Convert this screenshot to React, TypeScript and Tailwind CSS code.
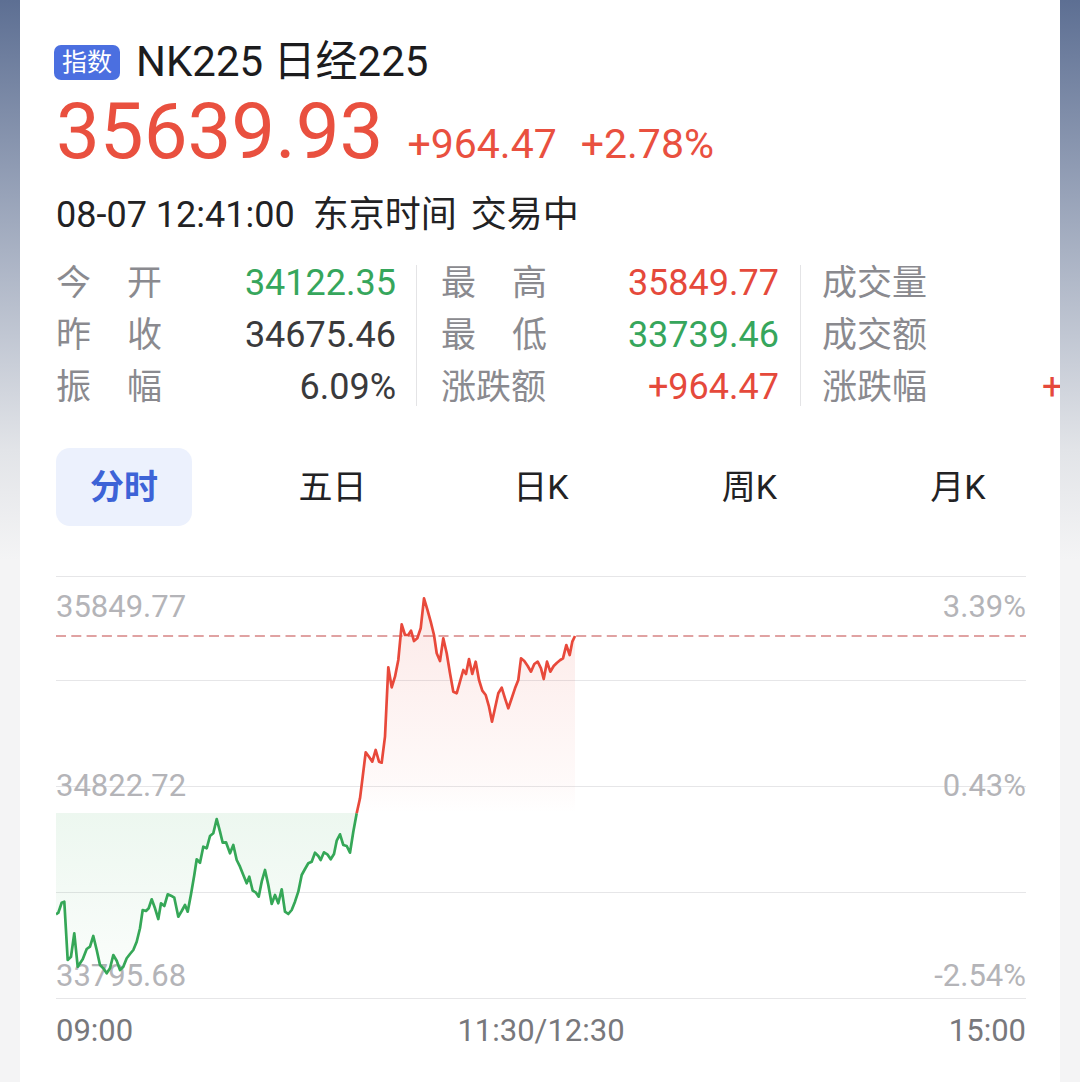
import React from "react";

const greenRaw: [number, number][] = [
  [48, 343], [55, 338], [65, 308], [73, 305], [83, 480], [93, 470], [103, 400], [113, 500],
  [128, 478], [140, 447], [150, 440], [160, 408], [170, 450], [180, 495], [190, 505], [200, 520],
  [210, 505], [220, 465], [230, 482], [240, 510], [250, 500], [260, 475], [270, 462], [280, 450],
  [290, 425], [300, 385], [308, 330], [318, 333], [326, 325], [335, 298], [345, 325], [355, 357],
  [363, 310], [373, 318], [383, 283], [393, 287], [403, 293], [415, 350], [425, 333], [435, 315],
  [443, 335], [453, 283], [463, 225], [470, 178], [480, 188], [490, 140], [500, 145], [510, 108],
  [520, 100], [530, 57], [540, 95], [548, 128], [558, 127], [570, 160], [580, 135], [590, 180],
  [600, 200], [610, 225], [620, 250], [628, 230], [638, 272], [648, 278], [656, 290], [665, 245],
  [675, 210], [685, 255], [695, 312], [705, 285], [715, 310], [725, 268], [735, 335], [745, 342],
  [755, 330], [765, 305], [775, 275], [785, 225], [795, 207], [805, 190], [815, 185], [825, 158],
  [835, 168], [842, 180], [852, 157], [862, 163], [872, 178], [882, 162], [890, 122], [900, 103],
  [910, 135], [920, 138], [930, 158], [940, 95], [950, 40],
];

const redRaw: [number, number][] = [
  [60, 655], [68, 590], [77, 517], [87, 530], [97, 545], [107, 510], [117, 545], [125, 548],
  [135, 470], [145, 262], [155, 322], [165, 290], [175, 240], [185, 133], [195, 165], [205, 165],
  [213, 152], [222, 183], [232, 175], [242, 145], [252, 55], [262, 88], [272, 125], [282, 165],
  [290, 220], [300, 243], [310, 175], [320, 220], [330, 280], [340, 335], [350, 340], [360, 305],
  [370, 270], [378, 282], [387, 237], [397, 282], [407, 245], [417, 300], [427, 332], [437, 345],
  [447, 380], [456, 425], [465, 385], [475, 340], [485, 323], [495, 355], [505, 385], [515, 355],
  [525, 325], [535, 300], [543, 235], [553, 243], [563, 258], [573, 275], [583, 252], [593, 245],
  [603, 265], [611, 297], [621, 245], [631, 275], [641, 258], [651, 248], [661, 240], [669, 235],
  [679, 195], [689, 225], [697, 185], [705, 168],
];

// page coordinates
const green = greenRaw.map(([x, y]) => [40 + x / 3, 800 + y / 3]);
const red = [green[green.length - 1], ...redRaw.map(([x, y]) => [340 + x / 3, 580 + y / 3])];

const BASE = 813;
const toPts = (pts: number[][]) => pts.map(([x, y]) => `${x.toFixed(1)},${y.toFixed(1)}`).join(" ");

const stats = [
  [
    { label: ["今", "开"], value: "34122.35", color: "text-[#36a65c]" },
    { label: ["昨", "收"], value: "34675.46", color: "text-[#3a3a3c]" },
    { label: ["振", "幅"], value: "6.09%", color: "text-[#3a3a3c]" },
  ],
  [
    { label: ["最", "高"], value: "35849.77", color: "text-[#e5493b]" },
    { label: ["最", "低"], value: "33739.46", color: "text-[#36a65c]" },
    { label: ["涨跌额"], value: "+964.47", color: "text-[#e5493b]" },
  ],
  [
    { label: ["成交量"], value: "--", color: "text-[#3a3a3c]" },
    { label: ["成交额"], value: "--", color: "text-[#3a3a3c]" },
    { label: ["涨跌幅"], value: "+2.78%", color: "text-[#e5493b]" },
  ],
];

function StatColumn({ rows, width }: { rows: (typeof stats)[number]; width: string }) {
  return (
    <div className={`shrink-0 flex flex-col ${width}`}>
      {rows.map((r, i) => (
        <div
          key={i}
          className="h-[52px] flex items-center justify-between text-[36px] leading-none whitespace-nowrap"
        >
          <span className="w-[106px] flex justify-between text-[#8a8a8f] text-[35px]">
            {r.label.map((l) => (
              <span key={l}>{l}</span>
            ))}
          </span>
          <span className={r.color}>{r.value}</span>
        </div>
      ))}
    </div>
  );
}

function Chart() {
  const grid = [576, 680, 786, 892, 998];
  return (
    <svg viewBox="56 576 970 423" width={970} height={423} className="block">
      <defs>
        <linearGradient id="gfill" gradientUnits="userSpaceOnUse" x1="0" y1={BASE} x2="0" y2="980">
          <stop offset="0" stopColor="#34a853" stopOpacity="0.09" />
          <stop offset="1" stopColor="#34a853" stopOpacity="0.02" />
        </linearGradient>
        <linearGradient id="rfill" gradientUnits="userSpaceOnUse" x1="0" y1="600" x2="0" y2={BASE}>
          <stop offset="0" stopColor="#e8483a" stopOpacity="0.12" />
          <stop offset="0.85" stopColor="#e8483a" stopOpacity="0.03" />
          <stop offset="1" stopColor="#e8483a" stopOpacity="0" />
        </linearGradient>
      </defs>
      {grid.map((y) => (
        <line key={y} x1={56} x2={1026} y1={y + 0.5} y2={y + 0.5} stroke="#e6e6e8" strokeWidth={1} />
      ))}
      <g fontFamily="Roboto, sans-serif" fontSize={31} fill="#b4b4b8">
        <text x={56} y={617}>35849.77</text>
        <text x={56} y={796}>34822.72</text>
        <text x={56} y={986}>33795.68</text>
        <text x={1026} y={617} textAnchor="end">3.39%</text>
        <text x={1026} y={796} textAnchor="end">0.43%</text>
        <text x={1026} y={986} textAnchor="end">-2.54%</text>
      </g>
      <line x1={56} x2={1026} y1={636} y2={636} stroke="#e0a2a2" strokeWidth={2.2} strokeDasharray="10 5.3" />
      <polygon points={`56,${BASE} ${toPts(green)} ${green[green.length - 1][0]},${BASE}`} fill="url(#gfill)" />
      <polygon points={`${red[0][0]},${BASE} ${toPts(red)} 575,${BASE}`} fill="url(#rfill)" />
      <polyline points={toPts(green)} fill="none" stroke="#35a757" strokeWidth={2.7} strokeLinejoin="round" />
      <polyline points={toPts(red)} fill="none" stroke="#e8493b" strokeWidth={2.7} strokeLinejoin="round" />
    </svg>
  );
}

export default function App() {
  const tabs = ["分时", "五日", "日K", "周K", "月K"];
  return (
    <div className="w-[1080px] min-h-[1082px] px-5 bg-[linear-gradient(180deg,#5d6f93_0px,#a8b1c3_250px,#e2e4e8_450px,#f4f4f5_560px)] font-['Roboto','Noto_Sans_CJK_SC',sans-serif]">
      <div className="bg-white min-h-[1082px] overflow-hidden pl-9 pr-[34px] pt-[44px]">
        <div className="h-[36px] flex items-center">
          <span className="-ml-0.5 h-[35px] px-[8px] rounded-[7px] bg-[#4b6fe0] text-white text-[25px] leading-none flex items-center">
            指数
          </span>
          <span className="ml-4 text-[42px] leading-none text-[#1c1c1e]">NK225 日经225</span>
        </div>

        <div className="mt-[13px] flex items-baseline text-[#e9503f] leading-none">
          <span className="text-[78px]">35639.93</span>
          <span className="ml-6 text-[41px]">+964.47</span>
          <span className="ml-6 text-[41px]">+2.78%</span>
        </div>

        <div className="mt-[26px] h-[36px] flex items-center text-[36px] leading-none text-[#222224] whitespace-nowrap">
          <span>08-07 12:41:00</span>
          <span className="ml-[18px]">东京时间</span>
          <span className="ml-[14px]">交易中</span>
        </div>

        <div className="mt-[24px] flex">
          <StatColumn rows={stats[0]} width="w-[340px]" />
          <div className="shrink-0 ml-5 mr-6 w-px h-[141px] self-center bg-[#e4e4e6]" />
          <StatColumn rows={stats[1]} width="w-[338px]" />
          <div className="shrink-0 ml-[21px] mr-[21px] w-px h-[141px] self-center bg-[#e4e4e6]" />
          <StatColumn rows={stats[2]} width="w-[337px]" />
        </div>

        <div className="mt-[35px] flex justify-between">
          {tabs.map((t, i) => (
            <div
              key={t}
              className={`w-[136px] h-[78px] rounded-[14px] flex items-center justify-center text-[34px] leading-none ${
                i === 0 ? "bg-[#ecf1fd] text-[#3d63d7] font-bold" : "text-[#222224]"
              }`}
            >
              {t}
            </div>
          ))}
        </div>

        <div className="mt-[50px]">
          <Chart />
          <div className="h-[62px] flex items-center justify-between text-[31px] leading-none text-[#78787c]">
            <span>09:00</span>
            <span>11:30/12:30</span>
            <span>15:00</span>
          </div>
        </div>
      </div>
    </div>
  );
}
